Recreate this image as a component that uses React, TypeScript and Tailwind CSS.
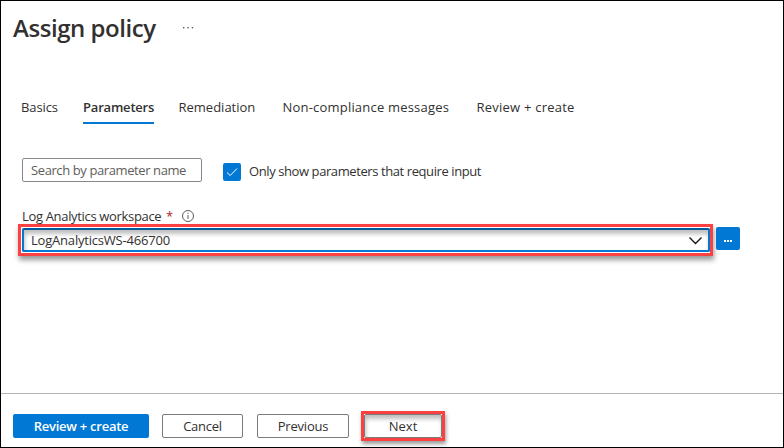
import React from "react";

const tabs = [
  { label: "Basics", cls: "ml-5 w-[62px] tracking-[-0.1px]" },
  { label: "Parameters", cls: "w-[95.5px] font-semibold tracking-[-0.2px]", active: true },
  { label: "Remediation", cls: "w-[104px] tracking-[0px]" },
  { label: "Non-compliance messages", cls: "w-[194px] tracking-[0.2px]" },
  { label: "Review + create", cls: "tracking-[0.23px]" },
];

const outlined =
  "flex h-6 items-center justify-center rounded-[2px] border border-[#7d7b79] bg-white";

export default function App() {
  return (
    <div className="flex h-[448px] w-[784px] flex-col overflow-hidden border border-black bg-white font-['Open_Sans','Noto_Sans',sans-serif] text-[13px] leading-[18px] text-[#323130]">
      <header className="flex h-[54px] items-center pl-3">
        <h1 className="w-[169px] whitespace-nowrap text-[24px] font-semibold leading-8 tracking-[-0.45px]">
          Assign policy
        </h1>
        <svg width="12" height="4" viewBox="0 0 12 4" fill="#605e5c" aria-label="More">
          <rect x="1" y="1" width="1.4" height="1.4" />
          <rect x="5.4" y="1" width="1.4" height="1.4" />
          <rect x="9.8" y="1" width="1.4" height="1.4" />
        </svg>
      </header>

      <nav className="mt-[43px] flex h-[26px]">
        {tabs.map((t) => (
          <div key={t.label} className={"shrink-0 whitespace-nowrap " + t.cls}>
            <span>{t.label}</span>
            {t.active && <div className="mt-[6px] h-[2px] w-[71px] bg-[#0078d4]" />}
          </div>
        ))}
      </nav>

      <div className="mt-[34px] flex h-6 items-center pl-[21px]">
        <div className="flex h-6 w-[180px] items-center whitespace-nowrap rounded-[2px] border border-[#8a8886] pl-2 tracking-[-0.4px] text-[#605e5c]">
          Search by parameter name
        </div>
        <div className="ml-[21px] mt-[3px] flex h-[18px] w-[18px] items-center justify-center rounded-[2px] bg-[#0078d4]">
          <svg width="12" height="12" viewBox="0 0 12 12" fill="none" stroke="white">
            <path d="M1 6.5L4.2 9.5L11 2.5" />
          </svg>
        </div>
        <span className="ml-2 mt-[2px] whitespace-nowrap tracking-[-0.41px]">
          Only show parameters that require input
        </span>
      </div>

      <div className="mt-[26px] flex h-4 items-center pl-[21px]">
        <span className="w-[144px] whitespace-nowrap tracking-[-0.33px]">
          Log Analytics workspace
        </span>
        <span className="w-[15px] text-[#a4262c]">*</span>
        <svg width="14" height="14" viewBox="0 0 14 14" fill="none" stroke="#605e5c">
          <circle cx="7" cy="7" r="5.5" />
          <path d="M7 6v4M7 3.8v1.2" />
        </svg>
      </div>

      <div className="flex pl-[17px]">
        <div className="h-8 w-[695px] border-[3px] border-[#fb4141] pb-px pl-px pt-px shadow-[1px_4px_5px_rgba(0,0,0,0.4)]">
          <div className="flex h-full items-center justify-between rounded-[2px] border-2 border-[#0078d4] border-t-[#005a9e] pl-[7px] pr-[5px] shadow-[inset_1px_4px_4px_rgba(0,0,0,0.25)]">
            <span className="tracking-[-0.2px]">LogAnalyticsWS-466700</span>
            <svg width="15" height="9" viewBox="0 0 15 9" fill="none" stroke="#111" strokeWidth="1.3">
              <path d="M1.5 1.5L7.5 7.5L13.5 1.5" />
            </svg>
          </div>
        </div>
        <button className="ml-[3px] mt-[3px] flex h-[23px] w-6 items-center justify-center rounded-[2px] bg-[#0078d4]">
          <svg width="10" height="6" viewBox="0 0 10 6" fill="white" aria-label="Browse">
            <path d="M1 4h2v2H1zM4 4h2v2H4zM7 4h2v2H7z" />
          </svg>
        </button>
      </div>

      <footer className="mt-auto flex h-[54px] shrink-0 border-t border-[#b5b5b5] pl-3 pt-5">
        <button className="flex h-6 w-[136px] items-center justify-center rounded-[2px] bg-[#0078d4] pb-px font-semibold tracking-[-0.25px] text-white">
          Review + create
        </button>
        <button className={outlined + " ml-[13px] w-[81px] pb-px tracking-[-0.25px]"}>Cancel</button>
        <button className={outlined + " ml-[14px] w-[92px] pb-px tracking-[-0.2px]"}>Previous</button>
        <div className="ml-3 mt-[-3px] h-[30px] w-[84px] border-[3px] border-[#fb4141] shadow-[1px_3px_4px_rgba(0,0,0,0.4)]">
          <button className={outlined + " w-[78px] pb-px shadow-[inset_1px_4px_4px_rgba(0,0,0,0.25)]"}>
            Next
          </button>
        </div>
      </footer>
    </div>
  );
}
